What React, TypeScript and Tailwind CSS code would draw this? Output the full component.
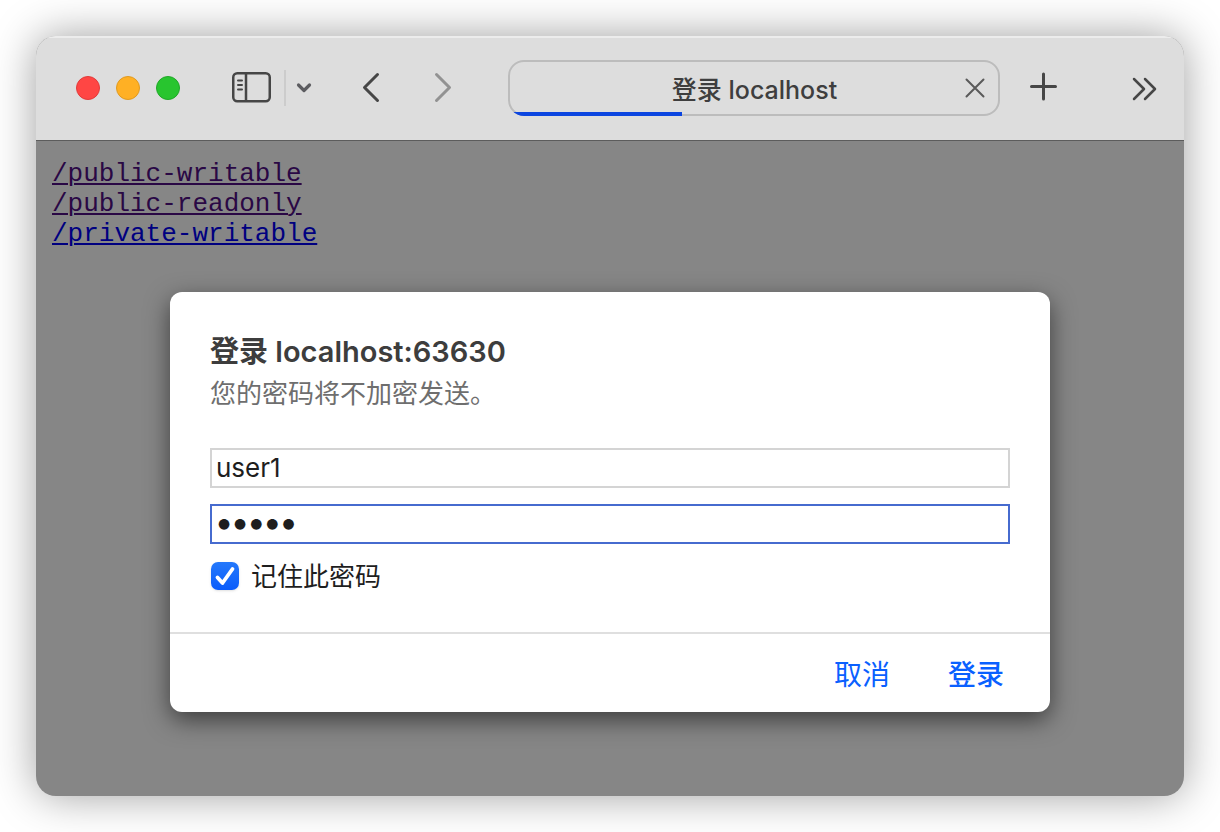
import { useState } from "react";
import type { ReactNode } from "react";

const links = [
  { path: "/public-writable", visited: true },
  { path: "/public-readonly", visited: true },
  { path: "/private-writable", visited: false },
];

export default function App() {
  return (
    <div className="p-9 bg-white font-['Inter','Noto_Sans_CJK_SC',sans-serif]">
      <div className="rounded-[20px] overflow-hidden bg-[#868686] shadow-[0_0_44px_rgba(0,0,0,0.38)]">
        <Toolbar />
        <main className="px-4 pt-[18px] pb-[84px]">
          <nav className="flex flex-col items-start">
            {links.map((link) => (
              <a
                key={link.path}
                href={link.path}
                className={`font-['Liberation_Mono',monospace] text-[26px] leading-[30px] underline decoration-2 underline-offset-2 ${
                  link.visited ? "text-[#2a0845]" : "text-[#000080]"
                }`}
              >
                {link.path}
              </a>
            ))}
          </nav>
          <LoginDialog />
        </main>
      </div>
    </div>
  );
}

function Toolbar() {
  return (
    <header className="flex items-center h-[105px] pl-10 pr-[26px] pb-[2px] bg-[#dddddd] border-t-2 border-t-[#ececec] border-b border-b-[#5c5c5c] text-[#464646]">
      <div className="flex gap-4">
        <button
          type="button"
          aria-label="关闭"
          className="size-6 rounded-full bg-[#ff4644] border border-[#e23b3a]"
        />
        <button
          type="button"
          aria-label="最小化"
          className="size-6 rounded-full bg-[#ffb024] border border-[#e09a20]"
        />
        <button
          type="button"
          aria-label="缩放"
          className="size-6 rounded-full bg-[#28c52f] border border-[#20a828]"
        />
      </div>

      <IconButton label="边栏" className="ml-[52px]">
        <svg width="39" height="33" viewBox="0 0 39 33" fill="none" stroke="currentColor">
          <rect x="1.25" y="1.25" width="36.5" height="28" rx="4" strokeWidth="2.5" />
          <path d="M14 1v28" strokeWidth="2.5" />
          <path d="M6 8.5h4M6 13h4M6 17.5h4" strokeWidth="2" strokeLinecap="round" />
        </svg>
      </IconButton>
      <div className="w-[2px] h-9 ml-[13px] bg-[#cccccc]" />
      <IconButton label="标签页组" className="ml-[10px] text-[#5c5c60]">
        <svg width="16" height="14" viewBox="0 0 16 14" fill="none" stroke="currentColor">
          <path
            d="m2.5 4 5.5 5.5L13.5 4"
            strokeWidth="3.2"
            strokeLinecap="round"
            strokeLinejoin="round"
          />
        </svg>
      </IconButton>
      <IconButton label="后退" className="ml-[50px]">
        <svg width="18" height="32" viewBox="0 0 18 32" fill="none" stroke="currentColor">
          <path
            d="M15.5 2.5 2.5 15.5l13 13"
            strokeWidth="3"
            strokeLinecap="round"
            strokeLinejoin="round"
          />
        </svg>
      </IconButton>
      <IconButton label="前进" className="ml-[54px] text-[#929292]">
        <svg width="18" height="32" viewBox="0 0 18 32" fill="none" stroke="currentColor">
          <path
            d="m2.5 2.5 13 13-13 13"
            strokeWidth="3"
            strokeLinecap="round"
            strokeLinejoin="round"
          />
        </svg>
      </IconButton>

      <AddressBar />

      <IconButton label="新标签页" className="ml-[30px]">
        <svg width="28" height="32" viewBox="0 0 28 32" fill="none" stroke="currentColor">
          <path d="M1.5 14.5h24M13.5 2v25" strokeWidth="3" strokeLinecap="round" />
        </svg>
      </IconButton>
      <IconButton label="更多" className="ml-[72px]">
        <svg width="28" height="26" viewBox="0 0 28 26" fill="none" stroke="currentColor">
          <path
            d="m4 4 10 10L4 24M15 4l10 10-10 10"
            strokeWidth="2.5"
            strokeLinecap="round"
            strokeLinejoin="round"
          />
        </svg>
      </IconButton>
    </header>
  );
}

function AddressBar() {
  return (
    <div className="relative flex-1 flex items-center h-14 ml-14 rounded-[16px] overflow-hidden ring-2 ring-inset ring-[#bcbcbc]">
      <div className="flex-1 pl-9 pt-1 text-center text-[25px] leading-8 font-medium text-[#3e3e3e]">
        登录 localhost
      </div>
      <IconButton label="停止载入" className="mr-[15px] text-[#5a5a5a]">
        <svg width="20" height="20" viewBox="0 0 20 20" fill="none" stroke="currentColor">
          <path d="m1.5 1.5 17 17M18.5 1.5l-17 17" strokeWidth="2" strokeLinecap="round" />
        </svg>
      </IconButton>
      {/* page load progress */}
      <div className="absolute left-0 bottom-0 w-[174px] h-1 bg-[#0b45e0]" />
    </div>
  );
}

function LoginDialog() {
  const [user, setUser] = useState("user1");
  const [password, setPassword] = useState("12345");
  const [remember, setRemember] = useState(true);

  return (
    <form
      role="dialog"
      aria-labelledby="login-title"
      onSubmit={(e) => e.preventDefault()}
      className="max-w-[880px] mx-auto mt-[43px] rounded-xl bg-white shadow-[0_8px_24px_rgba(0,0,0,0.55)]"
    >
      <div className="px-10 pt-10 pb-10">
        <h1
          id="login-title"
          className="text-[29px] leading-10 font-semibold text-[#3d3d3d]"
        >
          登录 localhost:63630
        </h1>
        <p className="text-[26px] leading-11 text-[#6e6e6e]">
          您的密码将不加密发送。
        </p>

        <input
          type="text"
          aria-label="用户名"
          value={user}
          onChange={(e) => setUser(e.target.value)}
          className="block w-full h-10 mt-8 px-1 pb-[2px] border-2 border-[#d4d4d4] text-[26px] text-[#1e1e1e] outline-none"
        />
        <input
          type="password"
          aria-label="密码"
          value={password}
          onChange={(e) => setPassword(e.target.value)}
          className="block w-full h-10 mt-4 px-1 pb-[6px] border-2 border-[#466bcf] font-bold text-[34px] leading-7 text-[#1e1e1e] outline-none"
        />

        <div className="flex items-center gap-3 mt-4">
          <span className="grid size-7 ml-px">
            <input
              id="remember"
              type="checkbox"
              checked={remember}
              onChange={(e) => setRemember(e.target.checked)}
              className="col-start-1 row-start-1 size-7 appearance-none rounded-[7px] border border-[#c4c4c4] checked:border-0 checked:bg-linear-to-b checked:from-[#2478fb] checked:to-[#0a5cfb] shadow-sm"
            />
            {remember && (
              <svg
                viewBox="0 0 28 28"
                className="col-start-1 row-start-1 size-7 pointer-events-none"
                fill="none"
                stroke="white"
              >
                <path
                  d="m6.5 15.5 5 5.5 10-14"
                  strokeWidth="3.8"
                  strokeLinecap="round"
                  strokeLinejoin="round"
                />
              </svg>
            )}
          </span>
          <label
            htmlFor="remember"
            className="pt-[2px] text-[26px] leading-[30px] text-[#1e1e1e]"
          >
            记住此密码
          </label>
        </div>
      </div>

      <div className="flex justify-end gap-[58px] h-20 pt-1 pr-[46px] border-t-2 border-[#dfdfdf] text-[28px] text-[#0a60ff]">
        <button type="button">取消</button>
        <button type="submit" className="font-medium">
          登录
        </button>
      </div>
    </form>
  );
}

interface IconButtonProps {
  label: string;
  className?: string;
  children: ReactNode;
}

function IconButton({ label, className = "", children }: IconButtonProps) {
  return (
    <button type="button" aria-label={label} className={`shrink-0 ${className}`}>
      {children}
    </button>
  );
}
